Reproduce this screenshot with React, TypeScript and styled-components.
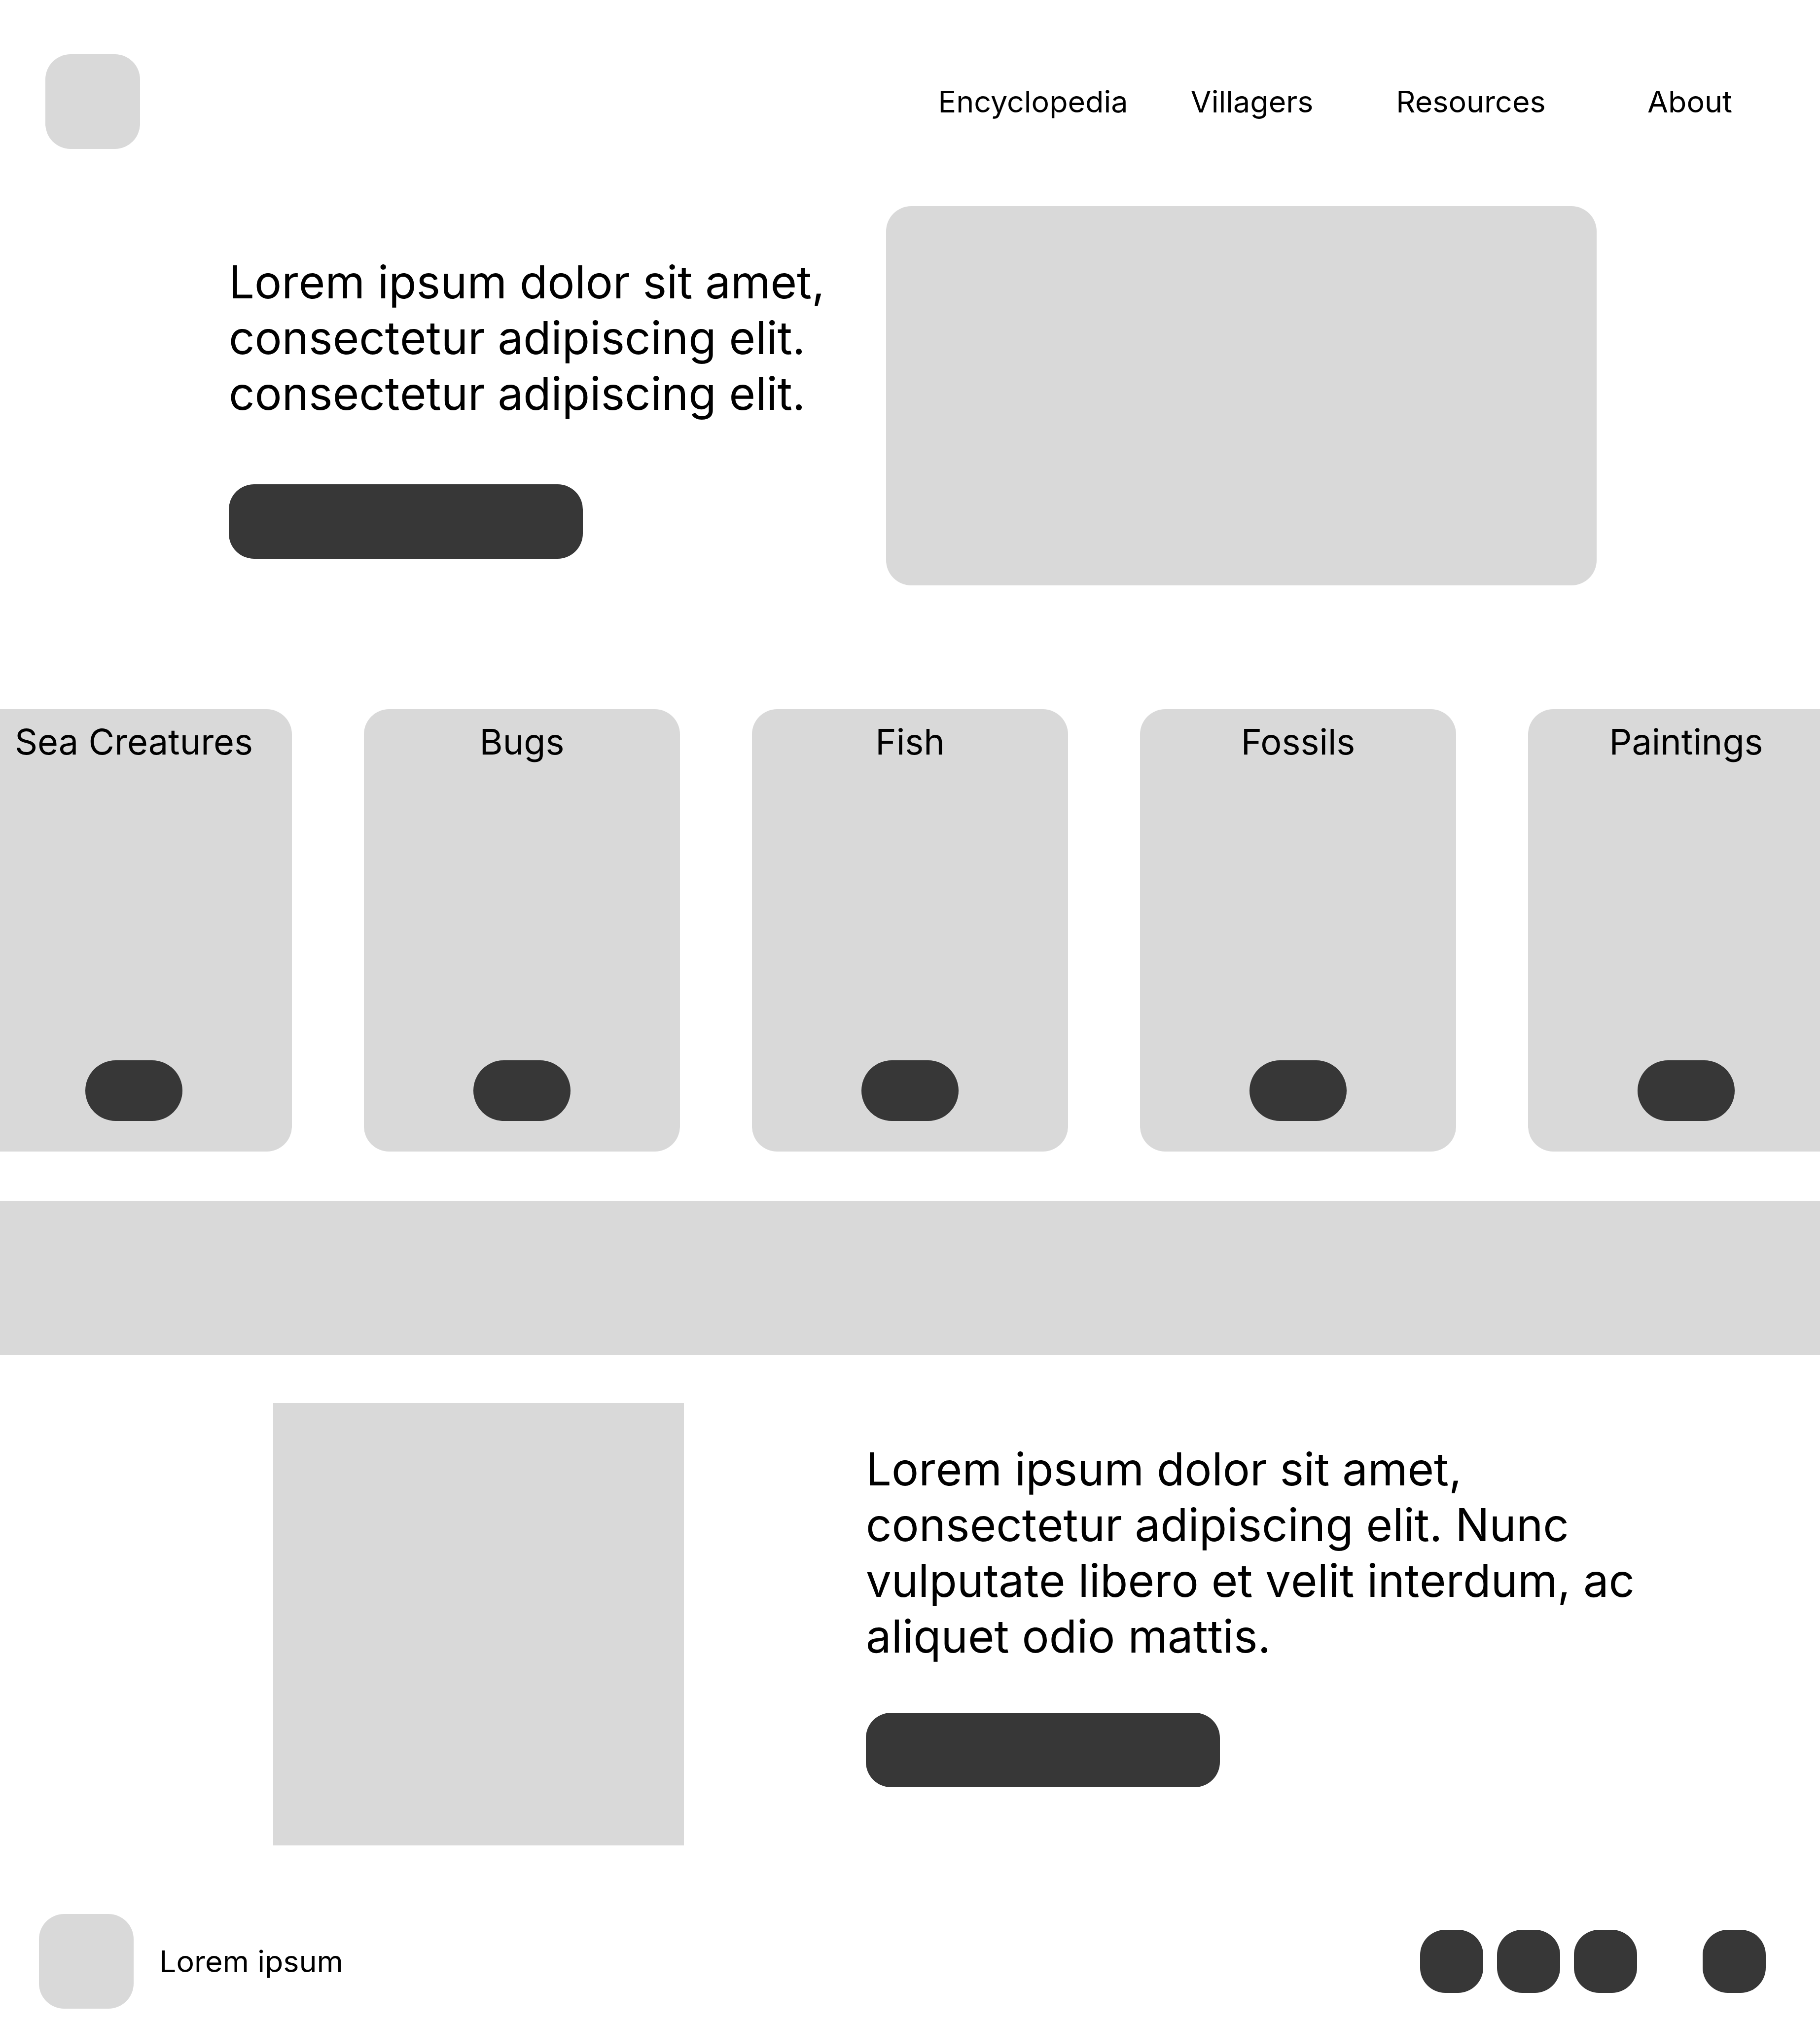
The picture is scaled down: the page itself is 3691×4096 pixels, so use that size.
import React from "react";
import styled, { createGlobalStyle } from "styled-components";

const color = { fill: "#d9d9d9", dark: "#373737", text: "#000000", page: "#ffffff" };

const GlobalStyle = createGlobalStyle`
  *, *::before, *::after { box-sizing: border-box; }
  body {
    margin: 0;
    background: ${color.page};
    color: ${color.text};
    font-family: Inter, "Liberation Sans", sans-serif;
  }
`;

const Page = styled.div`
  display: flex;
  flex-direction: column;
  overflow-x: hidden;
`;

const Header = styled.header`
  display: flex;
  align-items: center;
  justify-content: space-between;
  padding: 110px 42px 0 92px;
`;

const Logo = styled.a`
  display: block;
  flex: none;
  width: 192px;
  height: 192px;
  border-radius: 51px;
  background: ${color.fill};
`;

const Nav = styled.nav`
  display: grid;
  grid-template-columns: repeat(4, 444px);
`;

const NavLink = styled.a`
  font-size: 61px;
  line-height: 82px;
  text-align: center;
  color: inherit;
  text-decoration: none;
`;

const Hero = styled.section`
  display: grid;
  grid-template-columns: 1333fr 1441fr;
  align-items: start;
  padding: 116px 453px 0 464px;
`;

const Copy = styled.div<{ $top: number; $gap: number }>`
  display: flex;
  flex-direction: column;
  align-items: flex-start;
  gap: ${(p) => p.$gap}px;
  padding-top: ${(p) => p.$top}px;
`;

const Lead = styled.p`
  margin: 0;
  font-size: 92px;
  line-height: 113px;
  font-kerning: none;
`;

const Action = styled.button`
  width: 718px;
  height: 151px;
  padding: 0;
  border: 0;
  border-radius: 51px;
  background: ${color.dark};
  cursor: pointer;
`;

const HeroMedia = styled.div`
  height: 769px;
  border-radius: 51px;
  background: ${color.fill};
`;

const Carousel = styled.section`
  display: flex;
  justify-content: center;
  gap: 146px;
  margin-top: 251px;
  overflow: hidden;
`;

const Card = styled.article`
  display: flex;
  flex: none;
  flex-direction: column;
  align-items: center;
  justify-content: space-between;
  width: 641px;
  height: 897px;
  padding: 20px 0 62px;
  border-radius: 51px;
  background: ${color.fill};
`;

const CardTitle = styled.h2`
  margin: 0;
  font-size: 72px;
  font-weight: 400;
  line-height: 92px;
`;

const CardButton = styled.button`
  width: 197px;
  height: 123px;
  padding: 0;
  border: 0;
  border-radius: 62px;
  background: ${color.dark};
  cursor: pointer;
`;

const Band = styled.div`
  height: 313px;
  margin-top: 100px;
  background: ${color.fill};
`;

const Feature = styled.section`
  display: grid;
  grid-template-columns: 833px 1fr;
  column-gap: 369px;
  align-items: start;
  padding: 97px 290px 0 554px;
`;

const FeatureMedia = styled.div`
  height: 897px;
  background: ${color.fill};
`;

const Footer = styled.footer`
  display: flex;
  align-items: center;
  justify-content: space-between;
  padding: 139px 110px 23px 79px;
`;

const Brand = styled.div`
  display: flex;
  align-items: center;
  gap: 52px;
`;

const BrandName = styled.span`
  font-size: 61px;
  line-height: 82px;
`;

const FooterActions = styled.div`
  display: flex;
  gap: 133px;
`;

const IconGroup = styled.div`
  display: flex;
  gap: 28px;
`;

const IconButton = styled.button`
  width: 128px;
  height: 128px;
  padding: 0;
  border: 0;
  border-radius: 51px;
  background: ${color.dark};
  cursor: pointer;
`;

const links = ["Encyclopedia", "Villagers", "Resources", "About"];
const categories = ["Sea Creatures", "Bugs", "Fish", "Fossils", "Paintings"];
const socials = ["Social one", "Social two", "Social three"];

export default function App() {
  return (
    <Page>
      <GlobalStyle />
      <Header>
        <Logo href="#" aria-label="Home" />
        <Nav>
          {links.map((label) => (
            <NavLink key={label} href="#">
              {label}
            </NavLink>
          ))}
        </Nav>
      </Header>

      <main>
        <Hero>
          <Copy $top={97} $gap={128}>
            <Lead>
              Lorem ipsum dolor sit amet, consectetur adipiscing elit. consectetur adipiscing elit.
            </Lead>
            <Action type="button" aria-label="Get started" />
          </Copy>
          <HeroMedia />
        </Hero>

        <Carousel>
          {categories.map((name) => (
            <Card key={name}>
              <CardTitle>{name}</CardTitle>
              <CardButton type="button" aria-label={`Open ${name}`} />
            </Card>
          ))}
        </Carousel>

        <Band />

        <Feature>
          <FeatureMedia />
          <Copy $top={77} $gap={99}>
            <Lead>
              Lorem ipsum dolor sit amet, consectetur adipiscing elit. Nunc vulputate libero et velit
              interdum, ac aliquet odio mattis.
            </Lead>
            <Action type="button" aria-label="Learn more" />
          </Copy>
        </Feature>
      </main>

      <Footer>
        <Brand>
          <Logo href="#" aria-label="Back to top" />
          <BrandName>Lorem ipsum</BrandName>
        </Brand>
        <FooterActions>
          <IconGroup>
            {socials.map((name) => (
              <IconButton key={name} type="button" aria-label={name} />
            ))}
          </IconGroup>
          <IconButton type="button" aria-label="Contact" />
        </FooterActions>
      </Footer>
    </Page>
  );
}
